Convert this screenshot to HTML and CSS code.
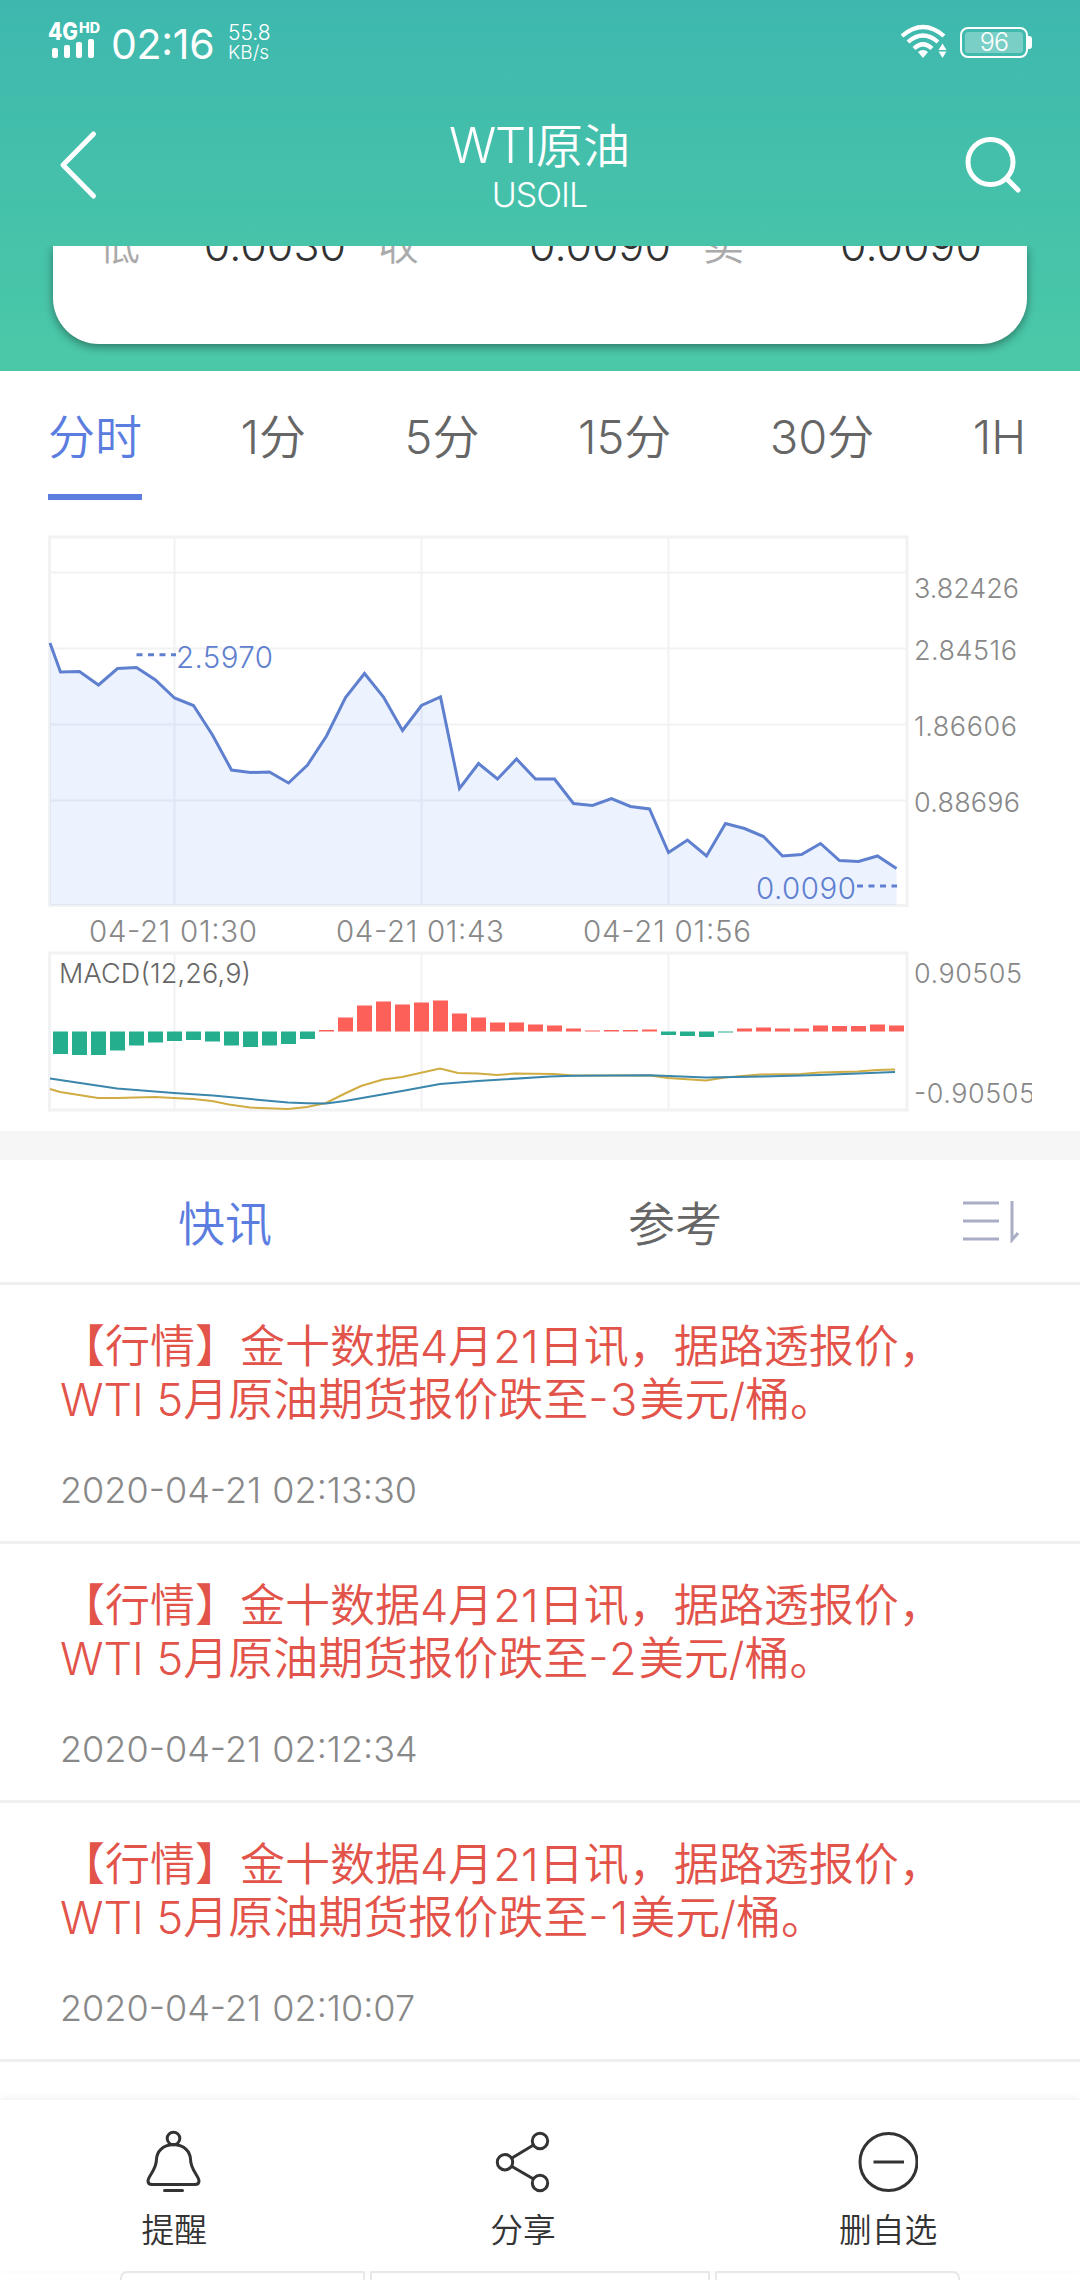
FILE: index.html
```html
<!DOCTYPE html>
<html lang="zh-CN">
	<head>
		<meta charset="utf-8">
		<title>WTI原油</title>
		<link rel="stylesheet" href="styles.css">
	</head>
	<body>
		<div class="top">
			<div class="status">
				<svg class="signal" width="54" height="44" viewBox="0 -4 54 44">
					<text class="net" x="0" y="18" textLength="30" lengthAdjust="spacingAndGlyphs">4G</text>
					<text class="hd" x="31" y="11" textLength="21" lengthAdjust="spacingAndGlyphs">HD</text>
					<rect x="4" y="26" width="6" height="10" rx="2"/>
					<rect x="16" y="23" width="6" height="13" rx="2"/>
					<rect x="28" y="20" width="6" height="16" rx="2"/>
					<rect x="40" y="17" width="6" height="19" rx="2"/>
				</svg>
				<span class="clock">02:16</span>
				<div class="speed"><span>55.8</span><span class="unit">KB/s</span></div>
				<svg class="wifi" width="50" height="36" viewBox="0 0 50 36">
					<g fill="none" stroke="#fff" stroke-width="4.200">
						<path d="M2 12 Q23 -6 44 12"/>
						<path d="M8 18 Q23 5 38 18"/>
						<path d="M14 24.500 Q23 16 32 24.500"/>
					</g>
					<path d="M18 28 Q23 24 28 28 L23 34 Z"/>
					<path d="M42.500 19.500 L46.500 26 H38.500 Z M42.500 34 L38.500 27.500 H46.500 Z"/>
				</svg>
				<div class="battery"><span>96</span></div>
			</div>
			<div class="nav">
				<svg width="40" height="70" viewBox="0 0 40 70"><path d="M35.500 4 L5 35 L35.500 66" fill="none" stroke="#fff" stroke-width="5" stroke-linecap="round" stroke-linejoin="round"/></svg>
				<div class="title">
					<h1><span>WTI</span>原油</h1>
					<p>USOIL</p>
				</div>
				<svg width="60" height="60" viewBox="0 0 60 60"><g fill="none" stroke="#fff" stroke-width="5" stroke-linecap="round"><circle cx="29.500" cy="27" r="22.500"/><path d="M46 44 L57 55"/></g></svg>
			</div>
			<div class="quote">
				<div class="card">
					<div class="cell"><label>低</label><b>0.0030</b></div>
					<div class="cell"><label>收</label><b>0.0090</b></div>
					<div class="cell last"><label>卖</label><b>0.0090</b></div>
				</div>
			</div>
		</div>

		<ul class="period">
			<li class="active">分时</li>
			<li>1分</li>
			<li>5分</li>
			<li>15分</li>
			<li>30分</li>
			<li>1H</li>
		</ul>

		<svg class="chart" width="984" height="580" viewBox="48 534 984 580">
			<g id="grid" class="grid">
				<path d="M49.500 537 H907 V905.500 H49.500 Z"/>
				<path d="M49.500 953 H907 V1110 H49.500 Z"/>
				<path class="thin" d="M50 572.500 H907 M50 648.500 H907 M50 724.500 H907 M50 800.500 H907"/>
				<path class="thin" d="M174.500 537 V905 M421.500 537 V905 M668.500 537 V905 M174.500 953 V1110 M421.500 953 V1110 M668.500 953 V1110"/>
			</g>
			<polygon id="area" class="area"/>
			<polyline id="line" class="line"/>
			<path class="dash" d="M136.500 654.700 H176 M857 886 H897"/>
			<g class="mark">
				<text x="176" y="668" textLength="97">2.5970</text>
				<text x="756" y="899" textLength="100">0.0090</text>
			</g>
			<g class="axis">
				<text x="914" y="598" textLength="105">3.82426</text>
				<text x="914" y="660" textLength="103">2.84516</text>
				<text x="914" y="736" textLength="103">1.86606</text>
				<text x="914" y="812" textLength="106">0.88696</text>
				<text x="914" y="983" textLength="108">0.90505</text>
				<text x="914" y="1103" textLength="121">-0.90505</text>
			</g>
			<g class="time">
				<text x="89" y="942" textLength="168">04-21 01:30</text>
				<text x="336" y="942" textLength="168">04-21 01:43</text>
				<text x="583" y="942" textLength="168">04-21 01:56</text>
			</g>
			<text class="macd" x="59" y="983" textLength="192">MACD(12,26,9)</text>
			<g id="bars"></g>
			<polyline class="dif" points="50,1089 60,1092 98,1098 117,1098 155,1097 193,1099 212,1101 229,1104.500 250,1107.500 288,1109 307,1107 326,1103 345,1093.500 361,1086 383,1079.500 402,1077 440,1068.500 458,1073 478,1073.500 497,1075 515,1073.500 554,1074 573,1075.500 650,1075.500 668,1078 706,1080.500 725,1077.500 760,1074.500 801,1074 820,1072.500 858,1071.500 877,1070 895,1069.500"/>
			<polyline class="dea" points="50,1078.500 80,1083 117,1088.500 174,1093 213,1095.500 260,1100 288,1102.500 307,1103.200 326,1103.500 345,1101 402,1091 440,1084 478,1081 550,1076.500 573,1075.800 650,1075.300 706,1077.500 763,1076.500 820,1075 895,1072"/>
		</svg>

		<div class="news">
			<div class="newstab">
				<span class="active">快讯</span>
				<span>参考</span>
				<svg width="58" height="44" viewBox="0 0 58 44"><path d="M1 4 H37 M1 22 H37 M1 40 H37 M50 2 V41 L56 34" fill="none" stroke="#a9adc6" stroke-width="3"/></svg>
			</div>
			<div class="item">
				<p>【行情】金十数据4月21日讯，据路透报价，<br>WTI 5月原油期货报价跌至<i>-3</i>美元/桶。</p>
				<time>2020-04-21 02:13:30</time>
			</div>
			<div class="item">
				<p>【行情】金十数据4月21日讯，据路透报价，<br>WTI 5月原油期货报价跌至<i>-2</i>美元/桶。</p>
				<time>2020-04-21 02:12:34</time>
			</div>
			<div class="item">
				<p>【行情】金十数据4月21日讯，据路透报价，<br>WTI 5月原油期货报价跌至<i>-1</i>美元/桶。</p>
				<time>2020-04-21 02:10:07</time>
			</div>
		</div>

		<div class="bottom">
			<div class="btn">
				<svg width="60" height="64" viewBox="0 0 60 64"><g fill="none" stroke="#333" stroke-width="3"><circle cx="29.500" cy="9.500" r="6.300"/><path d="M29.500 15.500 C18 16 13 23 12.500 30 C12.500 41 4 47 4 52 Q4 55.500 8 55.500 H51 Q55 55.500 55 52 C55 47 46.500 41 46.500 30 C46 23 41 16 29.500 15.500 Z"/><path d="M20.500 61.500 H38.500" stroke-linecap="round"/></g></svg>
				<span>提醒</span>
			</div>
			<div class="btn">
				<svg width="60" height="64" viewBox="0 0 60 64"><g fill="none" stroke="#333" stroke-width="3"><circle cx="47" cy="12" r="7.700"/><circle cx="12" cy="33.200" r="7.700"/><circle cx="47" cy="54" r="7.700"/><path d="M19 29 L40.500 16 M19 37.500 L40.500 50"/></g></svg>
				<span>分享</span>
			</div>
			<div class="btn">
				<svg width="60" height="64" viewBox="0 0 60 64"><g fill="none" stroke="#333" stroke-width="3"><circle cx="30.500" cy="33" r="28.500"/><path d="M15.500 33 H46"/></g></svg>
				<span>删自选</span>
			</div>
		</div>
		<div class="boxes"><div></div><div class="wide"></div><div></div></div>

		<script src="chart.js"></script>
	</body>
</html>
```
FILE: styles.css
```css
* {
	box-sizing: border-box;
}
body{
	margin: 0;
	width: 1080px;
	height: 2280px;
	overflow: hidden;
	background-color: #fff;
	font-family: Inter, "Noto Sans CJK SC", sans-serif;
	font-weight: 350;
	font-feature-settings: "case";
}
h1, p, ul {
	margin: 0;
	padding: 0;
	font-weight: 350;
}
i {
	font-style: normal;
	letter-spacing: 2px;
}
.top {
	height: 371px;
	background: linear-gradient(#3eb8ae, #4bc9a7);
	color: #fff;
}
/* 状态栏 */
.status {
	height: 84px;
	padding: 18px 48px 0 48px;
	display: flex;
	align-items: flex-start;
}
.signal, .wifi {
	fill: #fff;
	overflow: visible;
}
.net {
	font-size: 24px;
	font-weight: 800;
}
.hd {
	font-size: 14px;
	font-weight: 800;
}
.clock {
	margin: 4px 0 0 9px;
	font-size: 41px;
	line-height: 45px;
	font-weight: 400;
	width: 117px;
	letter-spacing: -.3px;
}
.speed {
	display: flex;
	flex-direction: column;
	font-size: 21px;
	line-height: 20px;
	padding-top: 5px;
}
.unit {
	font-size: 19px;
}
.wifi {
	margin-left: auto;
	margin-top: 6px;
}
.battery {
	width: 68px;
	height: 31px;
	margin: 9px 4px 0 10px;
	border: 2px solid #fff;
	border-radius: 8px;
	padding: 3px;
	position: relative;
}
.battery span {
	display: block;
	height: 21px;
	line-height: 21px;
	background-color: rgba(255,255,255,.3);
	border-radius: 3px;
	font-size: 25px;
	font-weight: 350;
	letter-spacing: -.8px;
	text-align: center;
}
.battery:after {
	content: "";
	position: absolute;
	right: -6px;
	top: 7px;
	width: 4px;
	height: 13px;
	background-color: #fff;
	border-radius: 0 3px 3px 0;
}
/* 标题 */
.nav {
	height: 162px;
	padding: 0 59px 0 58px;
	display: flex;
	justify-content: space-between;
	align-items: center;
}
.title {
	text-align: center;
	padding: 3px 0 0 20px;
}
.title h1 {
	font-size: 47px;
	line-height: 57px;
}
.title h1 span {
	font-size: 49px;
	letter-spacing: -1.500px;
}
.title p {
	font-size: 34px;
	line-height: 42px;
	letter-spacing: -1px;
	font-weight: 300;
}
.quote {
	height: 125px;
	padding: 0 53px;
	overflow: hidden;
}
.card {
	height: 98px;
	border-radius: 0 0 46px 46px;
	background-color: #fff;
	box-shadow: 0 3px 10px rgba(0,0,0,.4);
	padding: 0 45px 0 46px;
	display: flex;
	gap: 32px;
	overflow: hidden;
}
.cell {
	display: flex;
	justify-content: space-between;
	width: 247px;
	margin-top: -31px;
	height: 60px;
	line-height: 60px;
	color: #333;
}
.cell + .cell {
	width: 293px;
}
.cell.last {
	width: 279px;
}
.cell label {
	font-size: 41px;
	color: #aaa;
}
.cell b {
	font-weight: 350;
	font-size: 43px;
}
/* 周期 */
.period {
	height: 163px;
	padding: 30px 0 0 48px;
	list-style: none;
	display: flex;
	gap: 98.500px;
	white-space: nowrap;
	overflow: hidden;
	font-size: 47px;
	line-height: 71px;
	color: #666;
}
.period li {
	height: 99px;
}
.period .active {
	color: #5b7de0;
	border-bottom: 6px solid #5b7de0;
}
/* 图表 */
.chart {
	display: block;
	margin-left: 48px;
	font-weight: 300;
}
.grid path {
	fill: none;
	stroke: #f1f2f3;
	stroke-width: 3;
}
.grid .thin {
	stroke-width: 2;
}
.area {
	fill: rgba(80,125,255,.1);
}
.line {
	fill: none;
	stroke: #5f80cf;
	stroke-width: 3;
}
.dash {
	stroke: #5f80cf;
	stroke-width: 3;
	stroke-dasharray: 6 5.500;
}
.mark {
	font-size: 29.500px;
	fill: #5f80cf;
}
.axis {
	font-size: 27px;
	fill: #888;
}
.time {
	font-size: 29.500px;
	fill: #888;
}
.macd {
	font-size: 27px;
	fill: #666;
}
.dif, .dea {
	fill: none;
	stroke: #d0ac43;
	stroke-width: 2;
}
.dea {
	stroke: #3a86ad;
}
/* 快讯 */
.news {
	margin-top: 17px;
	border-top: 29px solid #f6f6f7;
	height: 969px;
}
.newstab {
	height: 125px;
	display: flex;
	align-items: center;
	border-bottom: 3px solid #f0f0f1;
	font-size: 47px;
	color: #666;
}
.newstab span {
	width: 450px;
	text-align: center;
	padding-bottom: 2px;
}
.newstab .active {
	color: #5b7de0;
}
.newstab svg {
	margin-left: 62px;
}
.item {
	height: 259px;
	padding: 35px 60px 0;
	border-bottom: 3px solid #f0f0f1;
}
.item p {
	font-size: 45px;
	line-height: 53px;
	color: #e2534a;
	white-space: nowrap;
}
.item time {
	display: block;
	margin-top: 39px;
	font-size: 36px;
	line-height: 50px;
	color: #888;
	word-spacing: 1px;
	font-weight: 300;
}
/* 底部 */
.bottom {
	height: 171px;
	background-color: #fff;
	box-shadow: 0 -2px 8px rgba(0,0,0,.06);
	position: relative;
	display: flex;
	justify-content: space-around;
	padding: 29px 1px 0 0;
	font-size: 32.800px;
	color: #333;
}
.btn {
	display: flex;
	flex-direction: column;
	align-items: center;
}
.btn span {
	margin-top: 15px;
	line-height: 44px;
}
.boxes {
	display: flex;
	justify-content: center;
	gap: 5px;
	position: relative;
}
.boxes div {
	width: 245px;
	height: 20px;
	border: 2px solid #e8e8e8;
	border-radius: 7px 2px 0 0;
}
.boxes .wide {
	width: 340px;
	border-radius: 2px 2px 0 0;
}
.boxes div:last-child {
	border-radius: 2px 7px 0 0;
}
```
FILE: chart.js
```js
var price=[672,671.5,685,668.5,667.5,680,698,705.5,735,770,772.5,772,783,765,736,697.5,673.5,697,730.5,705.5,697,788.5,763.5,779,759,779,779,803.5,805.5,798.5,806.5,809,852.5,840,856,823.5,828.5,836.5,856,854.5,843.5,860.5,861.5,856,868.5];
//负数为绿柱,正数为红柱
var macd=[-22.5,-23.5,-23.5,-19,-14,-11,-9.5,-8.5,-10,-14,-15.5,-14,-12.5,-7.5,1.5,14,26,30,27,29,31,18,14,9,9,7,6,3,1,1.5,1.5,2,-3.5,-4.5,-5.5,-1,3,4,3,3,6,5.5,5.5,7,6];
var start=60.5;
var step=19;
var zero=1031.5;

var pts="50,643";
for(var i=0;i<price.length;i++){
	pts+=" "+(start+i*step)+","+price[i];
}
document.getElementById("line").setAttribute("points",pts);
document.getElementById("area").setAttribute("points",pts+" 896.5,905 50,905");

var bars=document.getElementById("bars");
for(var i=0;i<macd.length;i++){
	var h=Math.abs(macd[i]);
	var r=document.createElementNS("http://www.w3.org/2000/svg","rect");
	r.setAttribute("x",start+i*step-7.5);
	r.setAttribute("y",macd[i]>0?zero-h:zero);
	r.setAttribute("width",15);
	r.setAttribute("height",h);
	r.setAttribute("fill",macd[i]>0?"#fd5f59":"#25ae8d");
	bars.appendChild(r);
}
```
